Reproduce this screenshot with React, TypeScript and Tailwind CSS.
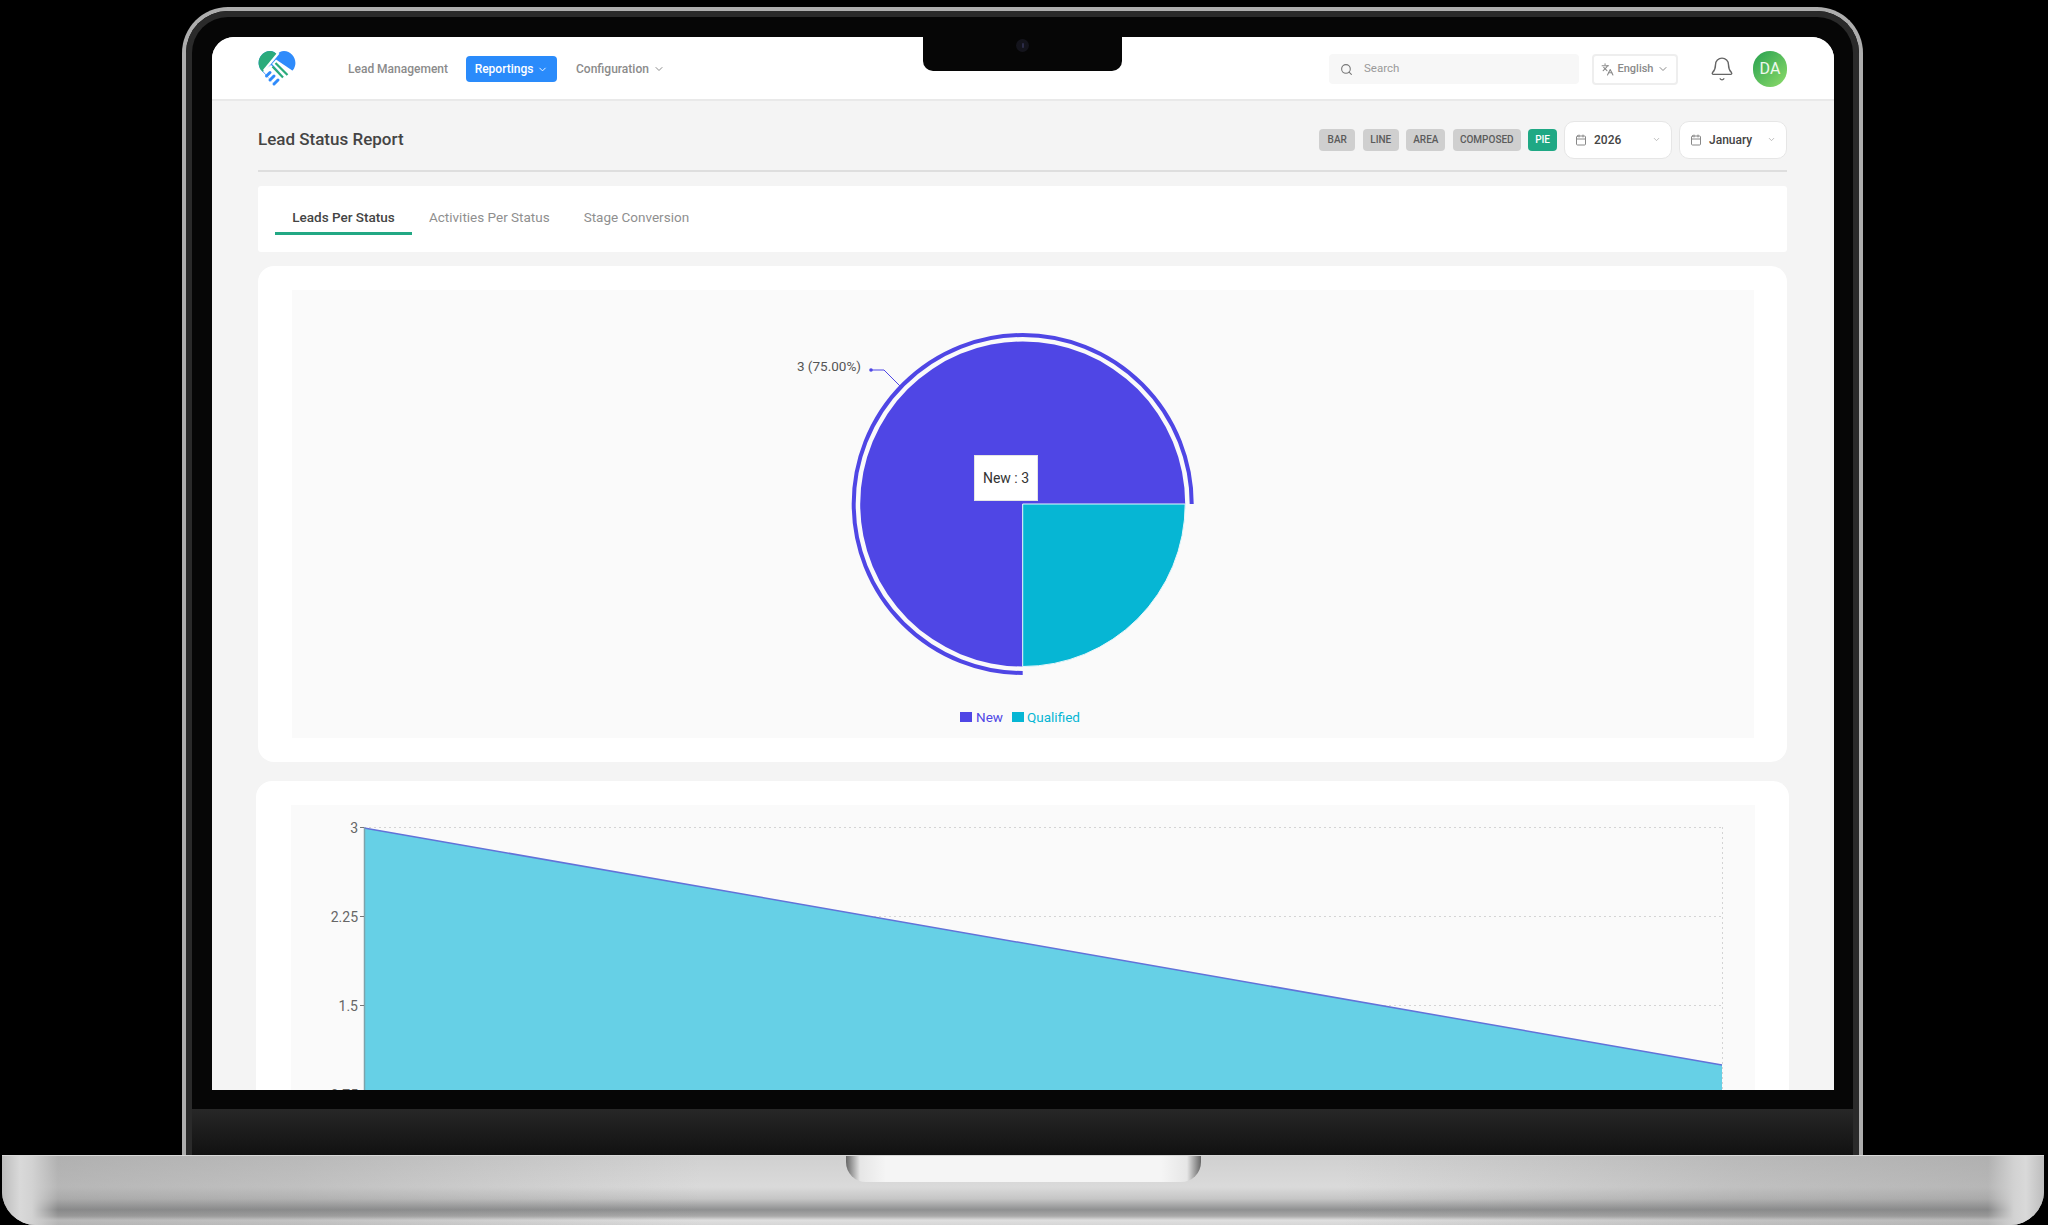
import { Bell, Calendar, ChevronDown, Languages, Search } from 'lucide-react'

const chartTypes = ['BAR', 'LINE', 'AREA', 'COMPOSED']
const tabs = ['Activities Per Status', 'Stage Conversion']

function Logo() {
  return (
    <svg width="38" height="38" viewBox="0 0 38 38" fill="none">
      <path d="M19 37 L3 20 C-3 12 3 1 12 1 C15 1 17.5 2.5 19 5 C20.5 2.5 23 1 26 1 C35 1 41 12 35 20 Z" fill="#2f8bfb" />
      <path d="M19 5 C17.5 2.5 15 1 12 1 C3 1 -3 12 3 20 L5 22 L19 5 Z" fill="#2bab7c" />
      {/* handshake: white gap, green fingers, blue fingers */}
      <path d="M20.5 3 L6 20.5" stroke="#fff" strokeWidth="2.4" />
      <path d="M5 21 L13 15 L30 30 L19 38 Z" fill="#fff" />
      <path d="M18 9.5 L14 14 L28 29 L35 21" fill="#fff" />
      <path d="M14.5 16.5 L25 27.5 M17.5 13 L29.5 25" stroke="#2bab7c" strokeWidth="2.2" />
      <path d="M8.5 26 L12 22.5 M12 30 L16 26 M16 34 L20 30" stroke="#2f8bfb" strokeWidth="3" strokeLinecap="round" />
    </svg>
  )
}

function Header() {
  return (
    <header className="relative h-[64px] shrink-0 bg-white border-b-2 border-[#e9e9e9] pl-[46px] pr-[47px] pt-[2px] flex items-center">
      <Logo />
      <span className="ml-[52px] text-[12px] font-medium text-[#8b8b8b]">Lead Management</span>
      <span className="ml-[18px] h-[26px] w-[91px] rounded-[4px] bg-[#2a8bfb] flex items-center justify-center gap-1 text-[12px] font-medium text-white">
        Reportings <ChevronDown size={11} />
      </span>
      <span className="ml-[19px] flex items-center gap-1 text-[12px] font-medium text-[#8b8b8b]">
        Configuration <ChevronDown size={12} />
      </span>
      <div className="ml-auto flex items-center">
        <div className="w-[250px] h-[30px] rounded-[4px] bg-[#f7f7f7] flex items-center pl-[11px] gap-[11px] text-[11.5px] text-[#9a9a9a]">
          <Search size={13} className="text-[#777]" />
          Search
        </div>
        <div className="ml-[13px] w-[86px] h-[31px] rounded-[4px] border-2 border-[#eeeeee] flex items-center justify-center gap-1 text-[11px] font-medium text-[#8a8a8a]">
          <Languages size={13} />
          English
          <ChevronDown size={12} />
        </div>
        <Bell size={26} strokeWidth={1.3} className="ml-[31px] text-[#666]" />
        <div className="ml-[18px] w-[34px] h-[36px] rounded-full bg-[linear-gradient(135deg,#25a04f,#8fdc6a)] flex items-center justify-center text-[16px] text-white/90">
          DA
        </div>
      </div>
      {/* camera notch */}
      <div className="absolute left-[711px] top-0 w-[199px] h-[34px] rounded-b-[10px] bg-[#060606] flex justify-center pt-[1px]">
        <div className="w-[13px] h-[13px] mt-[1px] rounded-full bg-[#14141c] flex items-center justify-center">
          <div className="w-[2px] h-[5px] rounded-full bg-[#2c2c48]" />
        </div>
      </div>
    </header>
  )
}

function Toolbar() {
  return (
    <div className="h-[71px] pt-[8px] border-b-2 border-[#dedede] flex items-center justify-between">
      <h1 className="text-[17px] font-medium text-[#444]">Lead Status Report</h1>
      <div className="flex items-center">
        <div className="flex items-center gap-[7.5px]">
          {chartTypes.map(t => (
            <span key={t} className="h-[22px] min-w-[36px] px-[7px] rounded-[4px] bg-[#cfcfcf] flex items-center justify-center text-[10px] font-medium text-[#5b5b5b]">
              {t}
            </span>
          ))}
          <span className="h-[22px] px-[7px] rounded-[4px] bg-[#1fa884] flex items-center text-[10px] font-medium text-white">PIE</span>
        </div>
        <div className="ml-[7px] w-[108px] h-[38px] rounded-[10px] bg-white border border-[#e6e6e6] flex items-center pl-[10px] pr-[10px] text-[12px] font-medium text-[#444]">
          <Calendar size={12} className="text-[#888] mr-[7px]" />
          2026
          <ChevronDown size={9} className="ml-auto text-[#aaa]" />
        </div>
        <div className="ml-[7px] w-[108px] h-[38px] rounded-[10px] bg-white border border-[#e6e6e6] flex items-center pl-[10px] pr-[10px] text-[12px] font-medium text-[#444]">
          <Calendar size={12} className="text-[#888] mr-[7px]" />
          January
          <ChevronDown size={9} className="ml-auto text-[#aaa]" />
        </div>
      </div>
    </div>
  )
}

function Tabs() {
  return (
    <div className="mt-[14px] h-[66px] bg-white rounded-[3px] pl-[17px] flex items-start">
      <div className="w-[137px] h-[49px] border-b-[3px] border-[#22a884] flex items-center justify-center text-[13.5px] font-medium text-[#444]">
        <span className="pt-[16px]">Leads Per Status</span>
      </div>
      {tabs.map((t, i) => (
        <span key={t} className={`${i === 0 ? 'ml-[17px]' : 'ml-[34px]'} pt-[21px] text-[13.5px] text-[#8f8f8f]`}>
          {t}
        </span>
      ))}
    </div>
  )
}

function PieCard() {
  return (
    <div className="mt-[14px] h-[496px] bg-white rounded-[16px] pl-[34px] pr-[33px] pt-[24px]">
      <div className="relative h-[448px] bg-[#fafafa] flex flex-col items-center">
        <svg width="1462" height="416" viewBox="0 0 1462 416" className="shrink-0">
          <path d="M730.7 214 L730.7 376.5 A162.5 162.5 0 1 1 893.2 214 Z" fill="#4f46e5" />
          <path d="M730.7 214 L893.2 214 A162.5 162.5 0 0 1 730.7 376.5 Z" fill="#06b6d4" stroke="#e6f7fb" strokeWidth="1" />
          <path d="M730.7 383 A169 169 0 1 1 899.7 214" fill="none" stroke="#4f46e5" strokeWidth="4" />
          <path d="M579 80 L592 80 L608 96" fill="none" stroke="#4f46e5" strokeWidth="1" />
          <circle cx="579" cy="80" r="1.8" fill="#4f46e5" />
          <text x="569" y="81" textAnchor="end" fontSize="13.5" fill="#555">3 (75.00%)</text>
        </svg>
        <div className="mt-[1px] ml-[-6px] flex items-center text-[13.5px] leading-[20px]">
          <span className="w-[12px] h-[10px] bg-[#4f46e5]" />
          <span className="ml-[4px] text-[#4f46e5]">New</span>
          <span className="ml-[9px] w-[12px] h-[10px] bg-[#06b6d4]" />
          <span className="ml-[3px] text-[#06b6d4]">Qualified</span>
        </div>
        <div className="absolute left-[682px] top-[165px] w-[64px] h-[46px] bg-white border border-[#e4e4e4] flex items-center justify-center text-[14px] text-[#333]">
          New : 3
        </div>
      </div>
    </div>
  )
}

function AreaCard() {
  return (
    <div className="mt-[19px] -mx-[2px] h-[330px] bg-white rounded-[16px] pl-[35px] pr-[34px] pt-[24px] shrink-0">
      <div className="h-[300px] bg-[#fafafa]">
        <svg width="1463" height="300" viewBox="0 0 1463 300" className="block">
          <g stroke="#d4d4d4" strokeWidth="1" strokeDasharray="2 3" fill="none">
            <path d="M73 22.5 H1431 M73 111.5 H1431 M73 200.5 H1431 M1431.5 22 V290" />
          </g>
          <path d="M73 23 L1431 260 V300 H73 Z" fill="#66d0e6" />
          <path d="M73 23 L1431 260" fill="none" stroke="#6272d8" strokeWidth="1.5" />
          <path d="M73.5 23 V300" stroke="#7da3ab" strokeWidth="1.5" />
          <path d="M69 22.5 H73 M69 111.5 H73 M69 200.5 H73 M69 289.5 H73" stroke="#777" strokeWidth="1" />
          <g fontSize="14" fill="#666" textAnchor="end">
            <text x="67" y="28">3</text>
            <text x="67" y="117">2.25</text>
            <text x="67" y="206">1.5</text>
            <text x="67" y="295">0.75</text>
          </g>
        </svg>
      </div>
    </div>
  )
}

function LaptopBase() {
  return (
    <div className="ml-[2px] w-[2042px] h-[70px] rounded-b-[34px] border-t border-[#d8d8d8] flex justify-center bg-[linear-gradient(to_right,#bdbdbd_0px,#d9d9d9_18px,#d2d2d2_30px,rgba(125,125,125,0.38)_56px,rgba(125,125,125,0.28)_300px,rgba(125,125,125,0)_700px,rgba(125,125,125,0)_1340px,rgba(125,125,125,0.28)_1742px,rgba(125,125,125,0.38)_1986px,#d2d2d2_2012px,#d9d9d9_2024px,#bdbdbd_2042px),linear-gradient(to_bottom,#d0d0d0_0%,#dadada_45%,#c6c6c6_62%,#8f9091_78%,#a9a9a9_87%,#dfdfdf_93%,#d6d6d6_100%)]">
      <div className="w-[355px] h-[26px] rounded-b-[20px] bg-[linear-gradient(to_right,#666_0px,#e6e6e6_14px,#f5f5f5_40px,#f5f5f5_315px,#e6e6e6_341px,#666_355px)]" />
    </div>
  )
}

export default function App() {
  return (
    <div className="w-[2048px] h-[1225px] bg-black overflow-hidden font-['Roboto',sans-serif]">
      <div className="pt-[7px] pl-[182px]">
        <div className="w-[1681px] h-[1148px] rounded-t-[46px] border-[4px] border-b-0 border-[#adadad]">
          <div className="h-full rounded-t-[42px] border-[6px] border-b-0 border-[#2a2a2a] bg-[#060606] flex flex-col">
            <div className="ml-[20px] mt-[20px] w-[1622px] h-[1053px] shrink-0 rounded-t-[22px] overflow-hidden bg-[#f4f4f4] flex flex-col">
              <Header />
              <main className="pl-[46px] pr-[47px] flex flex-col">
                <Toolbar />
                <Tabs />
                <PieCard />
                <AreaCard />
              </main>
            </div>
            <div className="mt-[19px] flex-1 bg-[linear-gradient(to_bottom,#272727,#111111)]" />
          </div>
        </div>
      </div>
      <LaptopBase />
    </div>
  )
}
